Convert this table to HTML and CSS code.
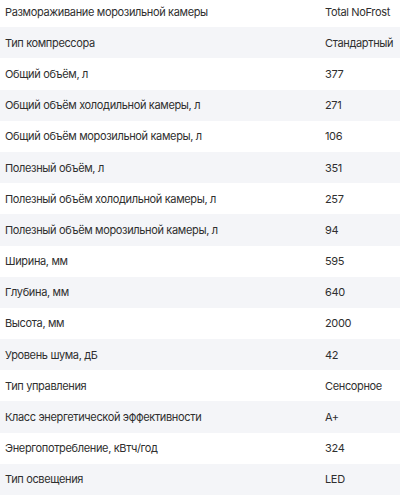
FILE: index.html
```html
<!DOCTYPE html>
<html lang="ru">
<head>
<meta charset="utf-8">
<link rel="stylesheet" href="styles.css">
</head>
<body>
<div class="specs">
  <div class="row"><div class="name">Размораживание морозильной камеры</div><div class="val">Total NoFrost</div></div>
  <div class="row"><div class="name">Тип компрессора</div><div class="val">Стандартный</div></div>
  <div class="row"><div class="name">Общий объём, л</div><div class="val">377</div></div>
  <div class="row"><div class="name">Общий объём холодильной камеры, л</div><div class="val">271</div></div>
  <div class="row"><div class="name">Общий объём морозильной камеры, л</div><div class="val">106</div></div>
  <div class="row"><div class="name">Полезный объём, л</div><div class="val">351</div></div>
  <div class="row"><div class="name">Полезный объём холодильной камеры, л</div><div class="val">257</div></div>
  <div class="row"><div class="name">Полезный объём морозильной камеры, л</div><div class="val">94</div></div>
  <div class="row"><div class="name">Ширина, мм</div><div class="val">595</div></div>
  <div class="row"><div class="name">Глубина, мм</div><div class="val">640</div></div>
  <div class="row"><div class="name">Высота, мм</div><div class="val">2000</div></div>
  <div class="row"><div class="name">Уровень шума, дБ</div><div class="val">42</div></div>
  <div class="row"><div class="name">Тип управления</div><div class="val">Сенсорное</div></div>
  <div class="row"><div class="name">Класс энергетической эффективности</div><div class="val">A+</div></div>
  <div class="row"><div class="name">Энергопотребление, кВтч/год</div><div class="val">324</div></div>
  <div class="row"><div class="name">Тип освещения</div><div class="val">LED</div></div>
</div>
</body>
</html>
```
FILE: styles.css
```css
html, body {
  margin: 0;
  padding: 0;
  background: #ffffff;
}
body {
  font-family: Inter, "Noto Sans", sans-serif;
  font-size: 11px;
  letter-spacing: -0.35px;
  color: #2f2f2f;
  overflow: hidden;
}
.specs {
  margin-top: -4px;
  display: flex;
  flex-direction: column;
}
.row {
  display: grid;
  grid-template-columns: 320px 1fr;
  height: 31.2px;
  align-items: center;
  padding-left: 5px;
}
.row:nth-child(even) {
  background: #f4f5f8;
}
.name, .val {
  white-space: nowrap;
}
```
